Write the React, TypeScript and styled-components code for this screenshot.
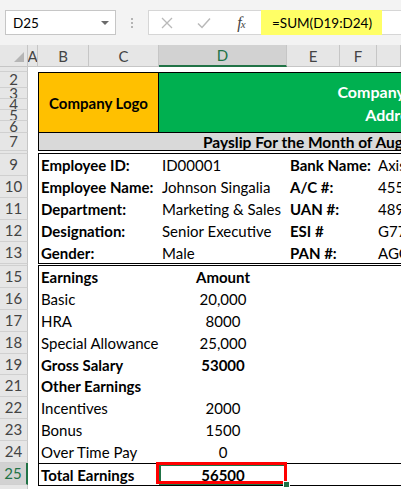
import React from 'react';
import styled, { createGlobalStyle } from 'styled-components';

const UI = `"Lato", "Noto Sans", sans-serif`;

const GlobalStyle = createGlobalStyle`
  html, body { margin: 0; padding: 0; background: #ffffff; }
  body { font-family: ${UI}; width: 401px; height: 489px; overflow: hidden; color: #000; }
  #root { width: 401px; height: 489px; overflow: hidden; display: flex; flex-direction: column; }
`;

/* ---------- formula bar ---------- */
const Toolbar = styled.div`
  height: 45px;
  flex: none;
  box-sizing: border-box;
  background: #f3f3f3;
  display: flex;
  align-items: flex-start;
  padding: 10px 0 0 5px;
`;

const NameBox = styled.div`
  width: 111px;
  height: 25px;
  flex: none;
  box-sizing: border-box;
  background: #fff;
  border: 1px solid #c6c6c6;
  display: flex;
  align-items: center;
  justify-content: space-between;
  padding: 0 6px 0 7px;
  font-size: 13.5px;
`;

const Caret = styled.span`
  width: 0;
  height: 0;
  border-left: 4px solid transparent;
  border-right: 4px solid transparent;
  border-top: 4px solid #6b6b6b;
`;

const Grip = styled.div`
  width: 32px;
  height: 25px;
  flex: none;
  display: flex;
  flex-direction: column;
  align-items: center;
  justify-content: center;
  gap: 2px;
  span {
    width: 2px;
    height: 2px;
    background: #b4b4b4;
  }
`;

const FormulaTools = styled.div`
  width: 113px;
  height: 25px;
  flex: none;
  box-sizing: border-box;
  background: #fff;
  border: 1px solid #d6d6d6;
  border-right: none;
  display: flex;
  align-items: center;
  padding-left: 6px;
  gap: 13px;
`;

const ToolIcon = styled.span`
  width: 24px;
  height: 24px;
  display: flex;
  align-items: center;
  justify-content: center;
`;

const Fx = styled.span`
  font-family: "Liberation Serif", "DejaVu Serif", serif;
  font-style: italic;
  font-size: 16px;
  color: #444;
  letter-spacing: -1px;
  small {
    font-size: 11px;
  }
`;

const FormulaInput = styled.div`
  flex: 1;
  height: 25px;
  box-sizing: border-box;
  background: #fff;
  border-top: 1px solid #d6d6d6;
  border-bottom: 1px solid #d6d6d6;
  display: flex;
`;

const Highlight = styled.div`
  width: 121px;
  background: #ffff66;
  display: flex;
  align-items: center;
  padding-left: 11px;
  box-sizing: border-box;
  font-size: 13.5px;
  margin: -1px 0;
`;

/* ---------- headers ---------- */
const HEAD_BG = '#e6e6e6';
const ACTIVE_BG = '#d2d2d2';
const GREEN = '#217346';

const ColHeaderRow = styled.div`
  display: flex;
  height: 22px;
  flex: none;
  background: ${HEAD_BG};
`;

const Corner = styled.div`
  width: 28px;
  flex: none;
  box-sizing: border-box;
  border-right: 1px solid #c6c6c6;
  border-bottom: 1px solid #c6c6c6;
  display: flex;
  align-items: flex-end;
  justify-content: flex-end;
  padding: 0 3px 4px 0;
`;

const CornerMark = styled.span`
  width: 0;
  height: 0;
  border-left: 10px solid transparent;
  border-bottom: 10px solid #b5b5b5;
`;

const ColHead = styled.div<{ $w?: number; $active?: boolean }>`
  width: ${(p) => (p.$w ? `${p.$w}px` : 'auto')};
  flex: ${(p) => (p.$w ? 'none' : '1')};
  box-sizing: border-box;
  border-right: 1px solid #c6c6c6;
  border-bottom: ${(p) => (p.$active ? `2px solid ${GREEN}` : '1px solid #c6c6c6')};
  background: ${(p) => (p.$active ? ACTIVE_BG : HEAD_BG)};
  color: ${(p) => (p.$active ? GREEN : '#444')};
  display: flex;
  align-items: center;
  justify-content: center;
  font-size: 15px;
  overflow: hidden;
`;

const Sheet = styled.div`
  display: flex;
  flex: 1;
  min-height: 0;
  overflow: hidden;
`;

const RowHeads = styled.div`
  width: 28px;
  flex: none;
  display: flex;
  flex-direction: column;
  background: ${HEAD_BG};
`;

const RowHead = styled.div<{ $h: number; $active?: boolean }>`
  height: ${(p) => p.$h}px;
  flex: none;
  box-sizing: border-box;
  border-bottom: 1px solid #d0d0d0;
  border-right: ${(p) => (p.$active ? `2px solid ${GREEN}` : '1px solid #c6c6c6')};
  background: ${(p) => (p.$active ? ACTIVE_BG : HEAD_BG)};
  color: ${(p) => (p.$active ? GREEN : '#444')};
  display: flex;
  align-items: center;
  justify-content: center;
  font-size: 15px;
  line-height: ${(p) => Math.max(p.$h - 1, 0)}px;
  overflow: hidden;
`;

const RowHeadFill = styled.div`
  flex: 1;
  border-right: 1px solid #c6c6c6;
`;

/* ---------- sheet content ---------- */
const Canvas = styled.div`
  flex: 1;
  min-width: 0;
  overflow: hidden;
  padding-left: 10px;
  display: flex;
  flex-direction: column;
  font-size: 15px;
  white-space: nowrap;
`;

const Gap = styled.div<{ $h: number }>`
  height: ${(p) => p.$h}px;
  flex: none;
`;

const SECTION_W = 540;

const TitleBlock = styled.div`
  display: flex;
  width: ${SECTION_W}px;
  height: 61px;
  flex: none;
  box-sizing: border-box;
  border: 1px solid #000;
  border-right: none;
`;

const Logo = styled.div`
  width: 120px;
  flex: none;
  box-sizing: border-box;
  background: #ffc000;
  border-right: 1px solid #000;
  display: flex;
  align-items: center;
  justify-content: center;
  font-weight: 700;
`;

const Banner = styled.div`
  flex: 1;
  background: #00b050;
  display: flex;
  align-items: center;
  overflow: hidden;
`;

const BannerText = styled.div`
  width: 470px;
  flex: none;
  display: flex;
  flex-direction: column;
  align-items: center;
  color: #fff;
  font-weight: 700;
  font-size: 16px;
  line-height: 23px;
`;

const Band = styled.div`
  width: ${SECTION_W}px;
  height: 18px;
  flex: none;
  box-sizing: border-box;
  background: #d9d9d9;
  border-left: 1px solid #000;
  border-bottom: 1px solid #000;
  display: flex;
  align-items: center;
  padding-left: 164px;
  font-weight: 700;
  font-size: 15.5px;
`;

const InfoBox = styled.div`
  width: ${SECTION_W}px;
  flex: none;
  border: 1px solid #000;
  border-right: none;
  display: flex;
  flex-direction: column;
`;

const InfoRow = styled.div<{ $h?: number }>`
  display: grid;
  grid-template-columns: 120px 128px 90px 1fr;
  height: ${(p) => p.$h ?? 22}px;
  align-items: center;
`;

const Label = styled.span<{ $pad?: number }>`
  font-weight: 700;
  padding-left: ${(p) => p.$pad ?? 2}px;
  overflow: hidden;
`;

const Value = styled.span<{ $pad?: number }>`
  padding-left: ${(p) => p.$pad ?? 3}px;
  overflow: hidden;
`;

const EarnBox = styled.div`
  width: ${SECTION_W}px;
  flex: none;
  border: 1px solid #000;
  border-right: none;
  display: flex;
  flex-direction: column;
`;

const EarnRow = styled.div<{ $total?: boolean; $h?: number }>`
  display: grid;
  grid-template-columns: 120px 128px 1fr;
  height: ${(p) => p.$h ?? 22}px;
  box-sizing: border-box;
  border-top: ${(p) => (p.$total ? '1px solid #000' : 'none')};
  align-items: center;
`;

const EarnLabel = styled.span<{ $bold?: boolean }>`
  padding-left: 2px;
  font-weight: ${(p) => (p.$bold ? 700 : 400)};
`;

const Amount = styled.span<{ $bold?: boolean }>`
  text-align: center;
  font-weight: ${(p) => (p.$bold ? 700 : 400)};
`;

const ActiveCell = styled.span`
  position: relative;
  align-self: stretch;
  display: flex;
  align-items: center;
  justify-content: center;
  font-weight: 700;
  &::before {
    content: '';
    position: absolute;
    inset: 0;
    border: 2px solid ${GREEN};
  }
`;

const RedMark = styled.span`
  position: absolute;
  top: -2px;
  left: -3px;
  right: 0;
  bottom: 1px;
  border: 3px solid #ff0000;
`;

const FillHandle = styled.span`
  position: absolute;
  right: -3px;
  bottom: -3px;
  width: 5px;
  height: 5px;
  background: ${GREEN};
  border: 1px solid #fff;
`;

/* ---------- data ---------- */
type RowDef = { label: string; h: number; active?: boolean };

const n22 = (labels: string[]): RowDef[] => labels.map((label) => ({ label, h: 22 }));

const ROWS: RowDef[] = [
  { label: '', h: 5 },
  { label: '2', h: 16 },
  { label: '3', h: 11 },
  { label: '4', h: 11 },
  { label: '5', h: 11 },
  { label: '6', h: 12 },
  { label: '7', h: 18 },
  { label: '', h: 3 },
  ...n22(['9', '10', '11', '12', '13']),
  { label: '', h: 2 },
  ...n22(['15', '16', '17', '18']),
  { label: '19', h: 21 },
  ...n22(['21', '22', '23', '24']),
  { label: '25', h: 22, active: true },
];

const COLS: { name: string; w?: number; active?: boolean }[] = [
  { name: 'A', w: 10 },
  { name: 'B', w: 51 },
  { name: 'C', w: 70 },
  { name: 'D', w: 128, active: true },
  { name: 'E', w: 53 },
  { name: 'F', w: 37 },
  { name: '' },
];

const INFO = [
  ['Employee ID:', 'ID00001', 'Bank Name:', 'Axis Bank'],
  ['Employee Name:', 'Johnson Singalia', 'A/C #:', '4556789123'],
  ['Department:', 'Marketing & Sales', 'UAN #:', '4896532147'],
  ['Designation:', 'Senior Executive', 'ESI #', 'G7745632'],
  ['Gender:', 'Male', 'PAN #:', 'AGCPS1234K'],
];

const EARNINGS: { label: string; amount: string; bold?: boolean; h?: number }[] = [
  { label: 'Earnings', amount: 'Amount', bold: true },
  { label: 'Basic', amount: '20,000' },
  { label: 'HRA', amount: '8000' },
  { label: 'Special Allowance', amount: '25,000' },
  { label: 'Gross Salary', amount: '53000', bold: true, h: 21 },
  { label: 'Other Earnings', amount: '', bold: true },
  { label: 'Incentives', amount: '2000' },
  { label: 'Bonus', amount: '1500' },
  { label: 'Over Time Pay', amount: '0' },
];

export default function App() {
  return (
    <>
      <GlobalStyle />
      <Toolbar>
        <NameBox>
          D25
          <Caret />
        </NameBox>
        <Grip>
          <span />
          <span />
          <span />
        </Grip>
        <FormulaTools>
          <ToolIcon>
            <svg width="12" height="12" viewBox="0 0 12 12">
              <path d="M1 1 L11 11 M11 1 L1 11" stroke="#b9b9b9" strokeWidth="1.3" fill="none" />
            </svg>
          </ToolIcon>
          <ToolIcon>
            <svg width="14" height="12" viewBox="0 0 14 12">
              <path d="M1 6.5 L5 10.5 L13 1.5" stroke="#b9b9b9" strokeWidth="1.5" fill="none" />
            </svg>
          </ToolIcon>
          <ToolIcon>
            <Fx>
              f<small>x</small>
            </Fx>
          </ToolIcon>
        </FormulaTools>
        <FormulaInput>
          <Highlight>=SUM(D19:D24)</Highlight>
        </FormulaInput>
      </Toolbar>

      <ColHeaderRow>
        <Corner>
          <CornerMark />
        </Corner>
        {COLS.map((c, i) => (
          <ColHead key={i} $w={c.w} $active={c.active}>
            {c.name}
          </ColHead>
        ))}
      </ColHeaderRow>

      <Sheet>
        <RowHeads>
          {ROWS.map((r, i) => (
            <RowHead key={i} $h={r.h} $active={r.active}>
              {r.label}
            </RowHead>
          ))}
          <RowHeadFill />
        </RowHeads>

        <Canvas>
          <Gap $h={5} />
          <TitleBlock>
            <Logo>Company Logo</Logo>
            <Banner>
              <BannerText>
                <span>Company Name</span>
                <span>Address</span>
              </BannerText>
            </Banner>
          </TitleBlock>
          <Band>Payslip For the Month of August 2019</Band>
          <Gap $h={2} />
          <InfoBox>
            {INFO.map((row, i) => (
              <InfoRow key={i} $h={i === INFO.length - 1 ? 21 : 22}>
                <Label>{row[0]}</Label>
                <Value>{row[1]}</Value>
                <Label $pad={3}>{row[2]}</Label>
                <Value $pad={1}>{row[3]}</Value>
              </InfoRow>
            ))}
          </InfoBox>
          <Gap $h={1} />
          <EarnBox>
            {EARNINGS.map((e, i) => (
              <EarnRow key={i} $h={e.h}>
                <EarnLabel $bold={e.bold}>{e.label}</EarnLabel>
                <Amount $bold={e.bold}>{e.amount}</Amount>
                <span />
              </EarnRow>
            ))}
            <EarnRow $total>
              <EarnLabel $bold>Total Earnings</EarnLabel>
              <ActiveCell>
                56500
                <RedMark />
                <FillHandle />
              </ActiveCell>
              <span />
            </EarnRow>
          </EarnBox>
        </Canvas>
      </Sheet>
    </>
  );
}
